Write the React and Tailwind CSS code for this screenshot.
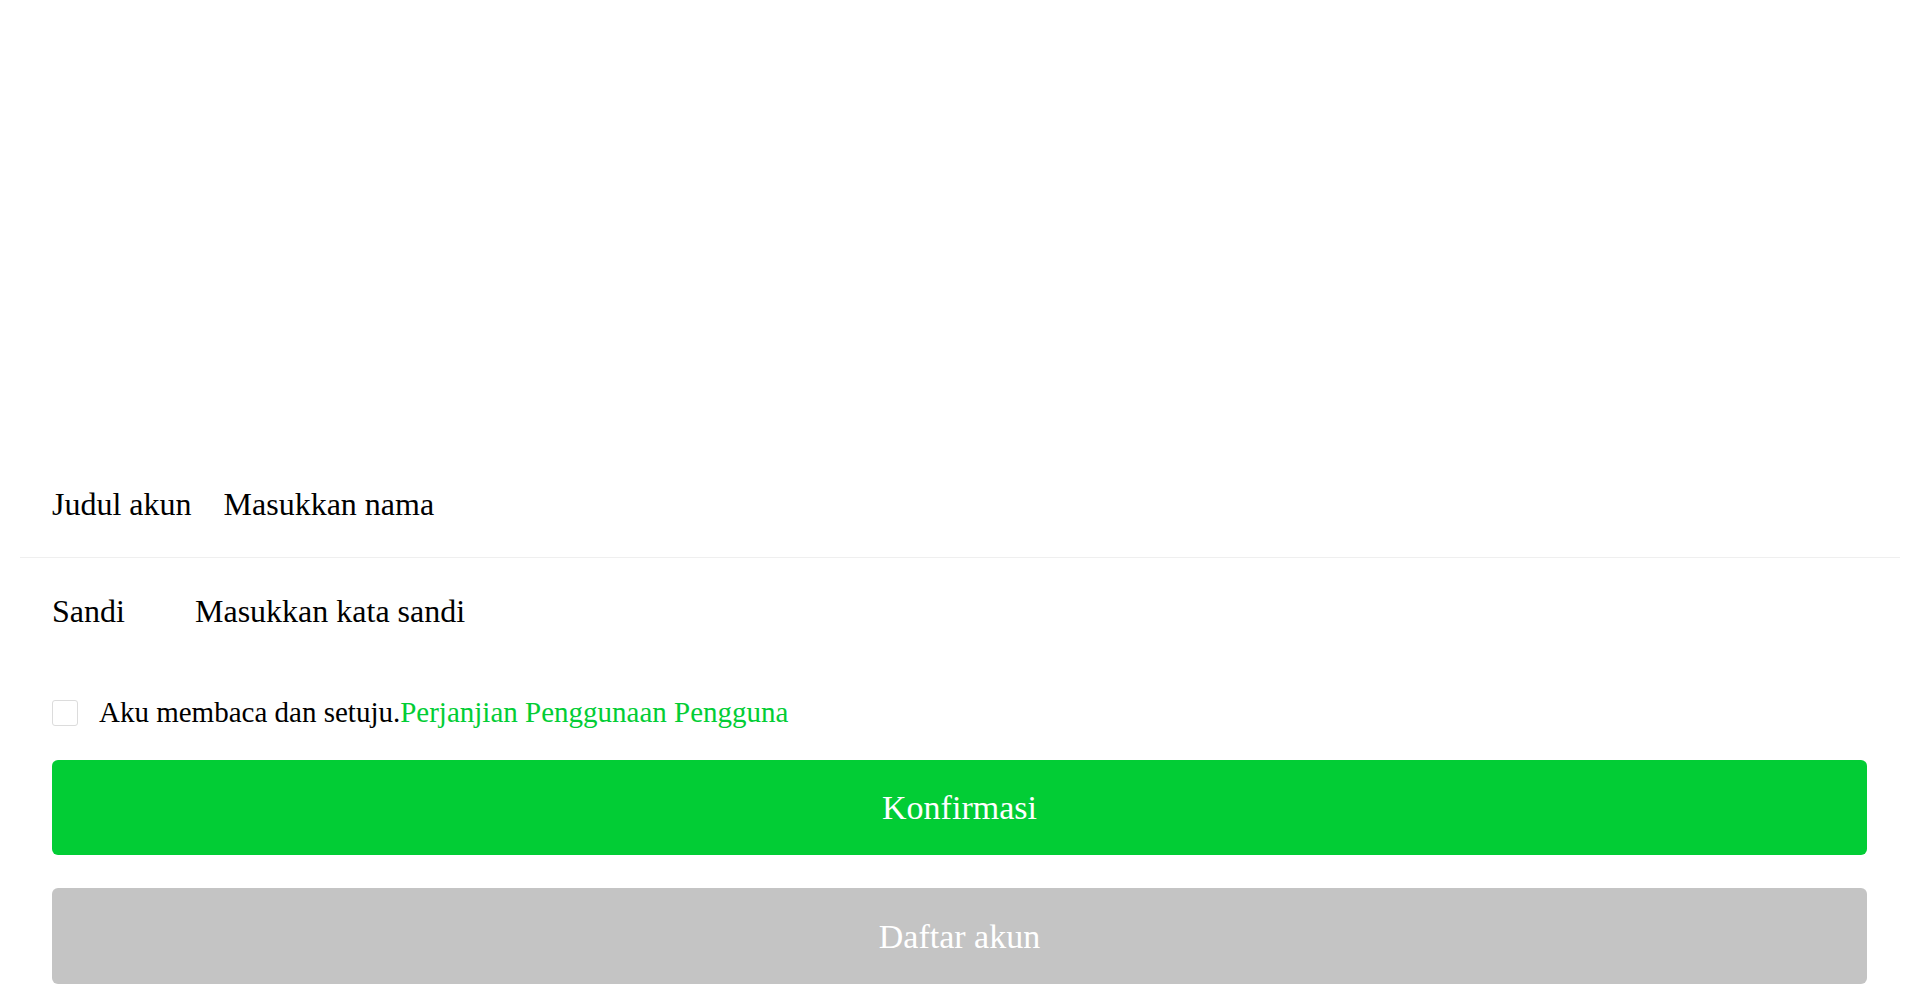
import { useState } from 'react'

const App = () => {
    const [name, setName] = useState('');
    const [password, setPassword] = useState('');
    const [agreed, setAgreed] = useState(false);

    return (
        <div className="min-h-screen bg-white font-['Liberation_Serif',serif] text-black pt-[451px] pb-[10px]">
            {/* account name */}
            <div className="h-[106px] flex items-center px-[52px]">
                <label className="min-w-[112px] mr-[32px] text-[32px] whitespace-nowrap">Judul akun</label>
                <input
                    type="text"
                    value={name}
                    onChange={(e) => setName(e.target.value)}
                    placeholder="Masukkan nama"
                    className="flex-1 text-[32px] bg-transparent outline-none placeholder:text-black"
                />
            </div>
            <div className="mx-[20px] h-px bg-[#efefef]"></div>

            {/* password */}
            <div className="h-[106px] flex items-center px-[52px]">
                <label className="min-w-[112px] mr-[31px] text-[32px] whitespace-nowrap">Sandi</label>
                <input
                    type="password"
                    value={password}
                    onChange={(e) => setPassword(e.target.value)}
                    placeholder="Masukkan kata sandi"
                    className="flex-1 text-[32px] bg-transparent outline-none placeholder:text-black"
                />
            </div>

            {/* agreement */}
            <div className="mt-[36px] h-[26px] flex items-center px-[52px]">
                <button
                    type="button"
                    onClick={() => setAgreed(!agreed)}
                    className={`w-[26px] h-[26px] rounded-[3px] border ${agreed ? 'bg-[#02cd35] border-[#02cd35]' : 'bg-white border-[#dcdcdc]'}`}
                ></button>
                <p className="ml-[21px] text-[29px] whitespace-nowrap">
                    Aku membaca dan setuju.<span className="text-[#02cd35]">Perjanjian Penggunaan Pengguna</span>
                </p>
            </div>

            {/* actions */}
            <div className="mt-[34px] pl-[52px] pr-[53px] flex flex-col gap-[33px]">
                <button className="h-[95px] w-full rounded-[6px] bg-[#02cd35] text-white text-[34px]">
                    Konfirmasi
                </button>
                <button className="h-[96px] w-full rounded-[6px] bg-[#c4c4c4] text-white text-[34px]">
                    Daftar akun
                </button>
            </div>
        </div>
    );
};

export default App;
